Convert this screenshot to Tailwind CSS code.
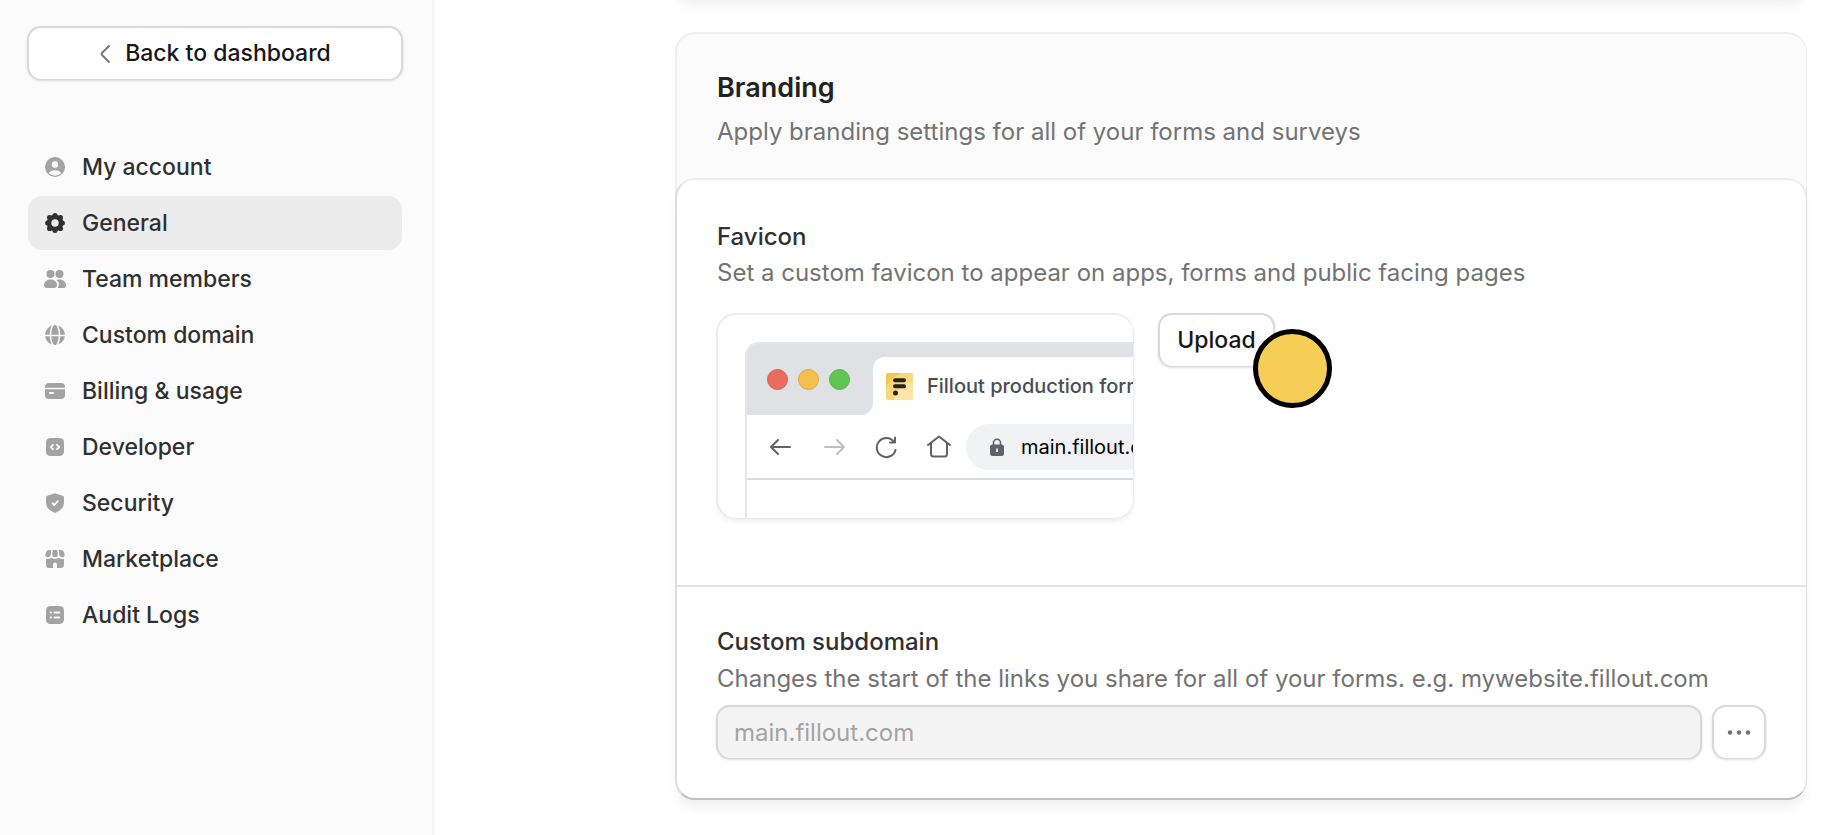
<!DOCTYPE html>
<html lang="en">
<head>
  <meta charset="UTF-8" />
  <meta name="viewport" content="width=device-width, initial-scale=1.0" />
  <title>General settings</title>
  <script src="https://cdn.jsdelivr.net/npm/@tailwindcss/browser@4"></script>
</head>
<body class="bg-white font-['Inter',sans-serif] text-2xl text-[#303030]">

  <div class="flex min-h-screen">

    <!-- Sidebar -->
    <aside class="w-[434px] shrink-0 border-r-2 border-[#f5f5f5] bg-[#fbfbfb] pt-[26px] pr-[30px] pl-7 text-[23px] font-medium">
      <button type="button" class="-mx-px flex h-[54px] w-[376px] items-center justify-center gap-3.5 rounded-[14px] border-2 border-b border-[#d9d9d9] bg-white text-[#171717] shadow-sm">
        <svg class="h-5 w-3" viewBox="0 0 12 20" fill="none" stroke="#7a7a7a" stroke-width="2" stroke-linecap="round" stroke-linejoin="round"><path d="M10 2 3.200 8.800Q2 10 3.200 11.200L10 18" /></svg>
        Back to dashboard
      </button>

      <nav class="mt-[60px] flex flex-col gap-0.5">
        <a href="#" class="flex h-[54px] items-center gap-[15px] rounded-[14px] px-[15px]">
          <svg class="size-6" viewBox="0 0 24 24"><circle cx="12" cy="12" r="10" fill="#a3a3a3" /><circle cx="12" cy="9.500" r="3.200" fill="#fbfbfb" /><path d="M5.800 18.200C7.200 14.300 16.800 14.300 18.200 18.200A9 9 0 0 1 5.800 18.200Z" fill="#fbfbfb" /></svg>
          My account
        </a>
        <a href="#" aria-current="page" class="flex h-[54px] items-center gap-[15px] rounded-[14px] bg-[#ececec] px-[15px]">
          <svg class="size-6" viewBox="0 0 24 24" fill="#303030"><circle cx="12" cy="12" r="6" fill="none" stroke="#303030" stroke-width="4.600" /><circle cx="12" cy="4.600" r="2.500" /><circle cx="12" cy="19.400" r="2.500" /><circle cx="4.600" cy="12" r="2.500" /><circle cx="19.400" cy="12" r="2.500" /><circle cx="6.600" cy="6.600" r="2.600" /><circle cx="17.400" cy="6.600" r="2.600" /><circle cx="6.600" cy="17.400" r="2.600" /><circle cx="17.400" cy="17.400" r="2.600" /></svg>
          General
        </a>
        <a href="#" class="flex h-[54px] items-center gap-[15px] rounded-[14px] px-[15px]">
          <svg class="size-6" viewBox="0 0 24 24" fill="#a3a3a3"><circle cx="7.500" cy="7" r="4" /><circle cx="16.500" cy="7" r="4" /><path d="M7.500 12.500c4 0 6.500 2.500 6.500 5.500 0 2-1.500 3-3 3H4c-1.500 0-3-1-3-3 0-3 2.500-5.500 6.500-5.500Z" /><path d="M13.500 13c1-.4 2-.5 3-.5 4 0 6.500 2.500 6.500 5.500 0 2-1.500 3-3 3h-5.500c2.500-3 1.500-6-1-8Z" /></svg>
          Team members
        </a>
        <a href="#" class="flex h-[54px] items-center gap-[15px] rounded-[14px] px-[15px]">
          <svg class="size-6" viewBox="0 0 24 24"><circle cx="12" cy="12" r="10" fill="#a3a3a3" /><path d="M2 12.500h20M10.500 1C6.500 7 6.500 17 10.500 23M13.500 1C17.500 7 17.500 17 13.500 23" fill="none" stroke="#fbfbfb" stroke-width="1.500" /></svg>
          Custom domain
        </a>
        <a href="#" class="flex h-[54px] items-center gap-[15px] rounded-[14px] px-[15px]">
          <svg class="size-6" viewBox="0 0 24 24"><rect x="2" y="4" width="20" height="16" rx="4" fill="#a3a3a3" /><path d="M2 9.500h20" stroke="#fbfbfb" stroke-width="1.500" /><path d="M7 14h3" stroke="#fbfbfb" stroke-width="2" stroke-linecap="round" /></svg>
          Billing &amp; usage
        </a>
        <a href="#" class="flex h-[54px] items-center gap-[15px] rounded-[14px] px-[15px]">
          <svg class="size-6" viewBox="0 0 24 24"><rect x="3" y="3" width="18" height="18" rx="4.500" fill="#a3a3a3" /><path d="M10 9.800 7.800 12l2.200 2.200M14 9.800l2.200 2.200-2.200 2.200" fill="none" stroke="#fbfbfb" stroke-width="1.800" stroke-linecap="round" stroke-linejoin="round" /></svg>
          Developer
        </a>
        <a href="#" class="flex h-[54px] items-center gap-[15px] rounded-[14px] px-[15px]">
          <svg class="size-6" viewBox="0 0 24 24"><path d="M12 2.200 19.600 4.800Q21 5.300 21 6.800V11.500C21 16.500 17.500 19.500 13 21.500Q12 22 11 21.500C6.500 19.500 3 16.500 3 11.500V6.800Q3 5.300 4.400 4.800Z" fill="#a3a3a3" /><path d="m9.500 12.200 1.800 1.800 3.600-3.800" fill="none" stroke="#fbfbfb" stroke-width="1.800" stroke-linecap="round" stroke-linejoin="round" /></svg>
          Security
        </a>
        <a href="#" class="flex h-[54px] items-center gap-[15px] rounded-[14px] px-[15px]">
          <svg class="size-6" viewBox="0 0 24 24" fill="#a3a3a3"><path d="M8.200 3H6Q4 3 3.300 4.800L2.500 7C1.900 8.800 3.200 10.200 4.900 10.200 6.400 10.200 7.600 9.200 7.700 7.800Z" /><path d="M9.700 3h4.600l.4 4.700C14.800 9.200 13.600 10.200 12 10.200S9.200 9.200 9.300 7.700Z" /><path d="M15.800 3H18Q20 3 20.700 4.800L21.500 7C22.100 8.800 20.800 10.200 19.100 10.200 17.600 10.200 16.400 9.200 16.300 7.800Z" /><path d="M3 11.700c2 .6 3.900.3 5.500-1 2 1.600 5 1.600 7 0 1.600 1.300 3.500 1.600 5.500 1V17.500C21 20 20 21 17.500 21H14v-3.500a2 2 0 0 0-4 0V21H6.500C4 21 3 20 3 17.500Z" /></svg>
          Marketplace
        </a>
        <a href="#" class="flex h-[54px] items-center gap-[15px] rounded-[14px] px-[15px]">
          <svg class="size-6" viewBox="0 0 24 24"><rect x="3" y="3" width="18" height="18" rx="4.500" fill="#a3a3a3" /><path d="M7.800 9.500H8M11.500 9.500h4.800M7.800 14.500H8M11.500 14.500h4.800" stroke="#fbfbfb" stroke-width="2" stroke-linecap="round" /></svg>
          Audit Logs
        </a>
      </nav>
    </aside>

    <main class="min-w-0 flex-1 overflow-hidden pr-9 pb-7 pl-[241px]">

      <!-- bottom edge of the card above -->
      <div class="-mt-10 h-10 rounded-[20px] shadow-[0_6px_12px_rgba(0,0,0,0.06)]"></div>

      <section class="mt-8 rounded-[20px] border-2 border-r border-[#efefef] bg-[#fbfbfb]">
        <header class="px-10 pt-[34px] pb-[27px]">
          <h2 class="text-[27px] leading-10 font-semibold text-[#222222]">Branding</h2>
          <p class="mt-[5px] leading-[38px] text-[#737373]">Apply branding settings for all of your forms and surveys</p>
        </header>

        <div class="-mr-px -mb-0.5 -ml-0.5 rounded-[20px] border-2 border-r border-t-[#ececec] border-r-[#dddddd] border-b-[#bfbfbf] border-l-[#dddddd] bg-white shadow-[0_10px_12px_-2px_rgba(0,0,0,0.06)]">

          <!-- Favicon -->
          <div class="border-b-2 border-[#e3e3e3] px-10 pt-[39px] pb-[66px]">
            <h3 class="leading-9 font-medium">Favicon</h3>
            <p class="leading-9 text-[#737373]">Set a custom favicon to appear on apps, forms and public facing pages</p>

            <div class="mt-[22px] -ml-px flex items-start gap-6">
              <div class="h-[206px] w-[418px] overflow-hidden rounded-[20px] border-2 border-r border-b border-[#ececec] bg-white pt-[27px] pl-[27px] shadow-md shadow-black/5">
                <div class="h-full w-[460px] rounded-tl-[14px] border-t-2 border-l-2 border-[#e5e6e8]">
                  <div class="flex h-[71px] overflow-hidden rounded-tl-xl">
                    <div class="flex w-[126px] items-center gap-2.5 rounded-br-xl bg-[#dfe1e5] pl-5">
                      <span class="size-[21px] rounded-full border border-[#d5605a] bg-[#ec6a5e]"></span>
                      <span class="size-[21px] rounded-full border border-[#d9a945] bg-[#f5bf4f]"></span>
                      <span class="size-[21px] rounded-full border border-[#57b14b] bg-[#61c554]"></span>
                    </div>
                    <div class="flex-1 bg-[linear-gradient(#dfe1e5_30px,#ffffff_30px)] pt-[13px]">
                      <div class="flex h-[58px] items-center gap-3.5 rounded-tl-xl bg-white pl-[13px] text-xl font-medium whitespace-nowrap text-[#4a4d51]">
                        <svg class="size-[27px] rounded-xs" viewBox="0 0 27 27"><path fill="#f9d87d" d="M0 0h27v27H0z" /><path fill="#f6c64f" d="M0 0h17C8 2 2 8 0 17Z" /><path fill="#fbe5a6" d="M27 9C18 10 10 17 8 27h19Z" /><path d="M9 7.200h9M9 13.300h9" stroke="#29241a" stroke-width="4" stroke-linecap="round" /><circle cx="9.500" cy="20" r="2.500" fill="#29241a" /></svg>
                        Fillout production forms
                      </div>
                    </div>
                  </div>
                  <div class="flex h-[65px] items-center gap-[15px] border-b-2 border-[#dbdce2] pl-[21px]">
                    <div class="flex gap-[29px]">
                      <svg class="size-6" viewBox="0 0 24 24" fill="none" stroke="#5f6368" stroke-width="2" stroke-linecap="round" stroke-linejoin="round"><path d="M22 12H3M10 5l-7 7 7 7" /></svg>
                      <svg class="size-6" viewBox="0 0 24 24" fill="none" stroke="#bdbfc2" stroke-width="2" stroke-linecap="round" stroke-linejoin="round"><path d="M4 12h19M16 5l7 7-7 7" /></svg>
                      <svg class="size-6" viewBox="0 0 24 24" fill="none" stroke="#5f6368" stroke-width="2" stroke-linecap="round" stroke-linejoin="round"><path d="M21.500 15A9.500 9.500 0 1 1 20 7M21 2.500v5h-5" /></svg>
                      <svg class="size-6" viewBox="0 0 24 24" fill="none" stroke="#5f6368" stroke-width="2" stroke-linecap="round" stroke-linejoin="round"><path d="M1 10 12 1.500 23 10M4 8v11q0 2.500 2.500 2.500h11q2.500 0 2.500-2.500V8" /></svg>
                    </div>
                    <div class="flex h-[46px] flex-1 items-center gap-[17px] rounded-l-full bg-[#f1f2f4] pl-6 text-xl whitespace-nowrap text-black">
                      <svg class="h-[18px] w-3.5" viewBox="0 0 14 18"><path d="M3.500 8V4.800a3.500 3.500 0 0 1 7 0V8" fill="none" stroke="#5f6368" stroke-width="1.600" /><rect y="6.500" width="14" height="11.500" rx="2.500" fill="#5f6368" /><path d="M7 10.500v3.500" stroke="#ffffff" stroke-width="1.600" /></svg>
                      main.fillout.com
                    </div>
                  </div>
                </div>
              </div>

              <div class="relative">
                <button type="button" class="h-[54px] w-[117px] rounded-[14px] border-2 border-b border-[#d9d9d9] bg-white text-[23px] font-medium text-[#171717] shadow-sm">Upload</button>
                <!-- click marker -->
                <span class="absolute top-4 left-[95px] size-[79px] rounded-full border-[5px] border-black bg-[#f6cd57]"></span>
              </div>
            </div>
          </div>

          <!-- Custom subdomain -->
          <div class="px-10 pt-[37px] pb-[39px]">
            <label for="subdomain" class="block leading-9 font-medium">Custom subdomain</label>
            <p class="mt-px leading-9 text-[#737373]">Changes the start of the links you share for all of your forms. e.g. mywebsite.fillout.com</p>
            <div class="mt-2 -ml-px flex gap-2.5">
              <input id="subdomain" type="text" disabled placeholder="main.fillout.com" class="h-[54px] min-w-0 flex-1 rounded-[14px] border-2 border-b border-[#d9d9d9] bg-[#f4f4f4] px-4 shadow-sm placeholder:text-[#a3a3a3]" />
              <button type="button" aria-label="More options" class="flex size-[54px] items-center justify-center rounded-[14px] border-2 border-b border-[#d9d9d9] bg-white shadow-sm">
                <svg class="size-6" viewBox="0 0 24 24" fill="#737373"><circle cx="3" cy="11.500" r="2.200" /><circle cx="12" cy="11.500" r="2.200" /><circle cx="21" cy="11.500" r="2.200" /></svg>
              </button>
            </div>
          </div>
        </div>
      </section>
    </main>
  </div>

</body>
</html>
